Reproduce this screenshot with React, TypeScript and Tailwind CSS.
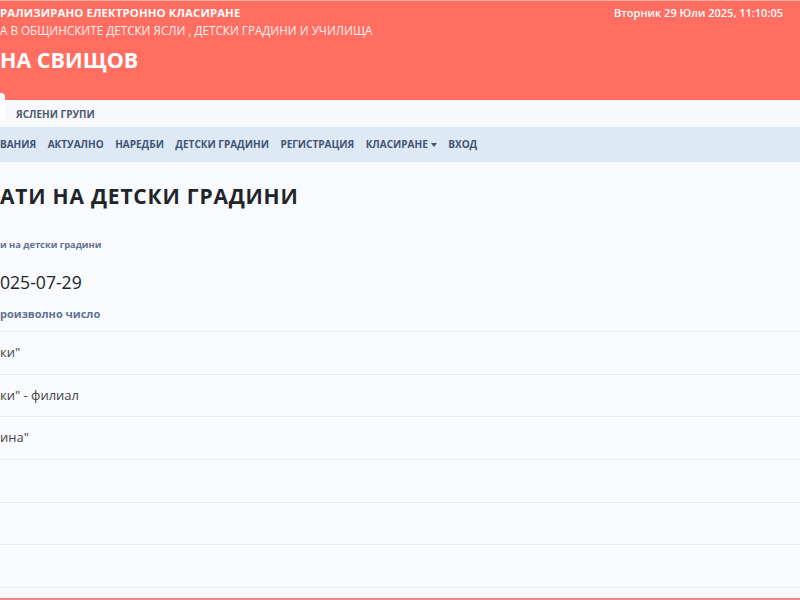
import React from "react";

export default function App() {
  const rows = ['ки"', 'ки" - филиал', 'ина"', "", "", ""];
  return (
    <div className="w-[800px] h-[600px] overflow-hidden bg-[#f9fafd] flex flex-col font-['Open_Sans',sans-serif]">
      <header className="h-[100px] shrink-0 bg-[#ff6e61] border-t border-[#ffb3ab] text-white">
        <div className="flex justify-between items-start pt-[4px]">
          <div className="text-[11.4px] font-bold leading-[16px] tracking-[0.1px]">РАЛИЗИРАНО ЕЛЕКТРОННО КЛАСИРАНЕ</div>
          <div className="text-[11px] font-semibold leading-[16px] pr-[17px]">Вторник 29 Юли 2025, 11:10:05</div>
        </div>
        <div className="text-[11.7px] leading-[16px] text-white/90 mt-[1px]">А В ОБЩИНСКИТЕ ДЕТСКИ ЯСЛИ , ДЕТСКИ ГРАДИНИ И УЧИЛИЩА</div>
        <div className="text-[21.5px] font-bold leading-[28px] mt-[8px]">НА СВИЩОВ</div>
      </header>
      <div className="h-[27px] shrink-0 bg-[#f7f9fc] flex items-start">
        <div className="w-[5px] h-[27px] -mt-[7px] bg-white rounded-tr-[4px]" />
        <div className="ml-[11px] mt-[7px] text-[10px] font-bold leading-[14px] text-[#4b5a6e]">ЯСЛЕНИ ГРУПИ</div>
      </div>
      <nav className="h-[35px] shrink-0 bg-[#dde9f5] flex items-center gap-[11.5px] text-[10px] font-bold text-[#3f5373]">
        <span>ВАНИЯ</span>
        <span>АКТУАЛНО</span>
        <span>НАРЕДБИ</span>
        <span>ДЕТСКИ ГРАДИНИ</span>
        <span>РЕГИСТРАЦИЯ</span>
        <span className="flex items-center gap-[3px]">
          КЛАСИРАНЕ
          <span className="w-0 h-0 border-l-[3px] border-r-[3px] border-t-[4px] border-l-transparent border-r-transparent border-t-[#3f5373]" />
        </span>
        <span>ВХОД</span>
      </nav>
      <main className="flex-1 flex flex-col">
        <h1 className="mt-[20px] text-[21px] font-bold leading-[28px] tracking-[0.8px] text-[#212529]">АТИ НА ДЕТСКИ ГРАДИНИ</h1>
        <div className="mt-[28px] text-[9.3px] font-bold leading-[14px] text-[#5d7391]">и на детски градини</div>
        <div className="mt-[19px] text-[17.6px] leading-[22px] text-[#212529]">025-07-29</div>
        <div className="mt-[13px] text-[11px] font-bold leading-[16px] text-[#5d7391]">роизволно число</div>
        <div className="mt-[9px] border-t border-[#e8eaef]">
          {rows.map((r, i) => (
            <div key={i} className="h-[42.7px] border-b border-[#e8eaef] flex items-center text-[13px] text-[#444]">
              {r}
            </div>
          ))}
        </div>
        <div className="mt-auto h-[2px] bg-[#f08a82]" />
      </main>
    </div>
  );
}
